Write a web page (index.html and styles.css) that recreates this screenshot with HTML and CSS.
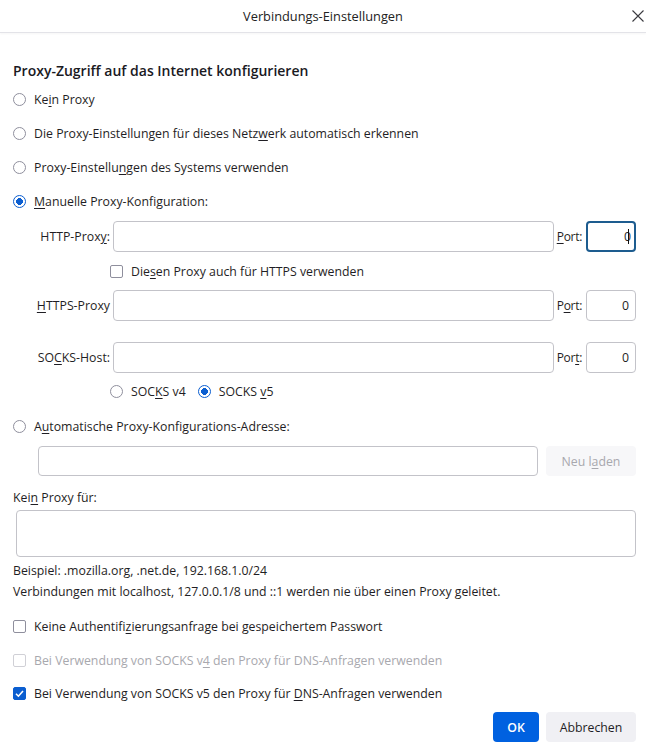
FILE: index.html
```html
<!DOCTYPE html>
<html lang="de">
<head>
    <meta charset="UTF-8">
    <meta name="viewport" content="width=device-width, initial-scale=1.0">
    <link rel="stylesheet" href="styles.css">
    <title>Verbindungs-Einstellungen</title>
</head>
<body>
    <header class="titlebar">
        <span></span>
        <h1>Verbindungs-Einstellungen</h1>
        <span class="close">
            <svg width="12" height="12" viewBox="0 0 12 12"><path d="M0.5 0.5 L11.5 11.5 M11.5 0.5 L0.5 11.5" stroke="#3a3a3f" stroke-width="1.1" fill="none"/></svg>
        </span>
    </header>

    <main class="dialog">
        <h2>Proxy-Zugriff auf das Internet konfigurieren</h2>

        <label class="row"><input type="radio" name="mode"><span>Ke<u>i</u>n Proxy</span></label>
        <label class="row"><input type="radio" name="mode"><span>Die Proxy-Einstellungen für dieses Netz<u>w</u>erk automatisch erkennen</span></label>
        <label class="row"><input type="radio" name="mode"><span>Proxy-Einstellu<u>n</u>gen des Systems verwenden</span></label>
        <label class="row"><input type="radio" name="mode" checked><span><u>M</u>anuelle Proxy-Konfiguration:</span></label>

        <div class="proxy-grid first">
            <label class="plabel">HTTP-Prox<u>y</u>:</label>
            <input type="text" class="field">
            <label class="port"><u>P</u>ort:</label>
            <div class="field portfield focused">0<span class="caret"></span></div>
        </div>

        <label class="row sub tall"><input type="checkbox"><span>Die<u>s</u>en Proxy auch für HTTPS verwenden</span></label>

        <div class="proxy-grid">
            <label class="plabel"><u>H</u>TTPS-Proxy</label>
            <input type="text" class="field">
            <label class="port">P<u>o</u>rt:</label>
            <div class="field portfield">0</div>
        </div>

        <div class="proxy-grid socks">
            <label class="plabel">SO<u>C</u>KS-Host:</label>
            <input type="text" class="field">
            <label class="port">Por<u>t</u>:</label>
            <div class="field portfield">0</div>
        </div>

        <div class="row sub socks-versions">
            <label><input type="radio" name="socks"><span>SOC<u>K</u>S v4</span></label>
            <label><input type="radio" name="socks" checked><span>SOCKS <u>v</u>5</span></label>
        </div>

        <label class="row"><input type="radio" name="mode"><span>A<u>u</u>tomatische Proxy-Konfigurations-Adresse:</span></label>

        <div class="autourl">
            <input type="text" class="field">
            <button class="btn disabled">Neu l<u>a</u>den</button>
        </div>

        <p class="nolabel">Kei<u>n</u> Proxy für:</p>
        <textarea class="field noproxy"></textarea>

        <p class="hint first-hint">Beispiel: .mozilla.org, .net.de, 192.168.1.0/24</p>
        <p class="hint">Verbindungen mit localhost, 127.0.0.1/8 und ::1 werden nie über einen Proxy geleitet.</p>

        <label class="row check first-check"><input type="checkbox"><span>Keine Authentifi<u>z</u>ierungsanfrage bei gespeichertem Passwort</span></label>
        <label class="row check dim"><input type="checkbox" disabled><span>Bei Verwendung von SOCKS v<u>4</u> den Proxy für DNS-Anfragen verwenden</span></label>
        <label class="row check last"><input type="checkbox" checked><span>Bei Verwendung von SOCKS v5 den Proxy für <u>D</u>NS-Anfragen verwenden</span></label>

        <div class="footer">
            <button class="btn primary">OK</button>
            <button class="btn">Abbrechen</button>
        </div>
    </main>
</body>
</html>
```

FILE: styles.css
```css
* {
    margin: 0;
    padding: 0;
    box-sizing: border-box;
    font-family: 'Open Sans', sans-serif;
}

body {
    width: 646px;
    height: 750px;
    background: #ffffff;
    color: #1f1e24;
    font-size: 12.3px;
    overflow: hidden;
}

u {
    text-decoration-thickness: 1px;
    text-underline-offset: 2px;
}

.titlebar {
    height: 33px;
    display: grid;
    grid-template-columns: 1fr auto 1fr;
    align-items: center;
    border-bottom: 1px solid #e3e3e8;
    box-shadow: 0 1px 2px rgba(0, 0, 0, 0.04);
}

.titlebar h1 {
    font-size: 12.8px;
    font-weight: 400;
    color: #222;
}

.close {
    justify-self: end;
    margin-right: 2px;
    display: flex;
}

.dialog {
    padding: 27px 10px 0 13px;
    display: flex;
    flex-direction: column;
}

h2 {
    font-size: 14px;
    font-weight: 600;
    line-height: 22px;
    color: #1a1a1f;
}

.row {
    height: 34px;
    display: flex;
    align-items: center;
    gap: 8px;
}

.row.sub {
    margin-left: 97px;
}

.row.tall {
    height: 38px;
}

/* radios + checkboxes */
input[type="radio"],
input[type="checkbox"] {
    appearance: none;
    width: 13px;
    height: 13px;
    flex: none;
    border: 1px solid #8f8f9d;
    background: #fff;
    margin: 0;
}

input[type="radio"] {
    border-radius: 50%;
}

input[type="radio"]:checked {
    border: 1.5px solid #0b5ed0;
    background: radial-gradient(circle, #0b5ed0 0 3.2px, #fff 3.6px);
}

input[type="checkbox"] {
    border-radius: 2px;
}

input[type="checkbox"]:checked {
    border-color: #0b5ed0;
    background: #0b5ed0 url("data:image/svg+xml,%3Csvg xmlns='http://www.w3.org/2000/svg' viewBox='0 0 13 13'%3E%3Cpath d='M3 6.8 L5.4 9.2 L10 3.9' stroke='white' stroke-width='1.6' fill='none'/%3E%3C/svg%3E") center / 13px 13px no-repeat;
}

input[type="checkbox"]:disabled {
    border-color: #d0d0d6;
}

.dim {
    color: #a8a8ae;
}

.field {
    height: 31px;
    border: 1px solid #c3c3c9;
    border-radius: 4px;
    background: #fff;
    font-size: 12.3px;
    outline: none;
}

.proxy-grid {
    display: grid;
    grid-template-columns: 97px 1fr auto 50px;
    align-items: center;
    column-gap: 3px;
}

.proxy-grid.first {
    margin-top: 3px;
}

.proxy-grid.socks {
    margin-top: 21px;
}

.plabel {
    text-align: right;
}

.port {
    margin-right: 1px;
    font-size: 12px;
    letter-spacing: -0.3px;
}

.portfield {
    display: flex;
    align-items: center;
    justify-content: flex-end;
    padding-right: 6px;
}

.portfield.focused {
    border: 2px solid #1d5c8f;
    padding-right: 5px;
}

.caret {
    width: 1px;
    height: 15px;
    background: #111;
    margin-left: -3px;
}

.socks-versions {
    height: 36px;
    gap: 12px;
}

.socks-versions label {
    display: flex;
    align-items: center;
    gap: 8px;
}

.autourl {
    margin: 3px 0 0 25px;
    display: flex;
    gap: 8px;
}

.autourl .field {
    flex: 1;
    height: 30px;
}

.btn {
    height: 30px;
    border: none;
    border-radius: 4px;
    background: #f0f0f4;
    color: #1f1e24;
    font-size: 12.3px;
    padding: 0 14px;
}

.btn.disabled {
    width: 90px;
    background: #f7f7f9;
    color: #a8a8ae;
}

.nolabel {
    margin-top: 11px;
    line-height: 22px;
}

.noproxy {
    margin: 1px 0 0 3px;
    height: 47px;
    resize: none;
}

.hint {
    line-height: 21px;
}

.first-hint {
    margin-top: 3px;
}

.first-check {
    margin-top: 7px;
}

.row.last {
    height: 33px;
}

.footer {
    margin-top: 2px;
    display: flex;
    justify-content: flex-end;
    gap: 7px;
}

.btn.primary {
    width: 46px;
    padding: 0;
    background: #0061e0;
    color: #fff;
    font-weight: 600;
}

.footer .btn:last-child {
    width: 90px;
    padding: 0;
}
```
